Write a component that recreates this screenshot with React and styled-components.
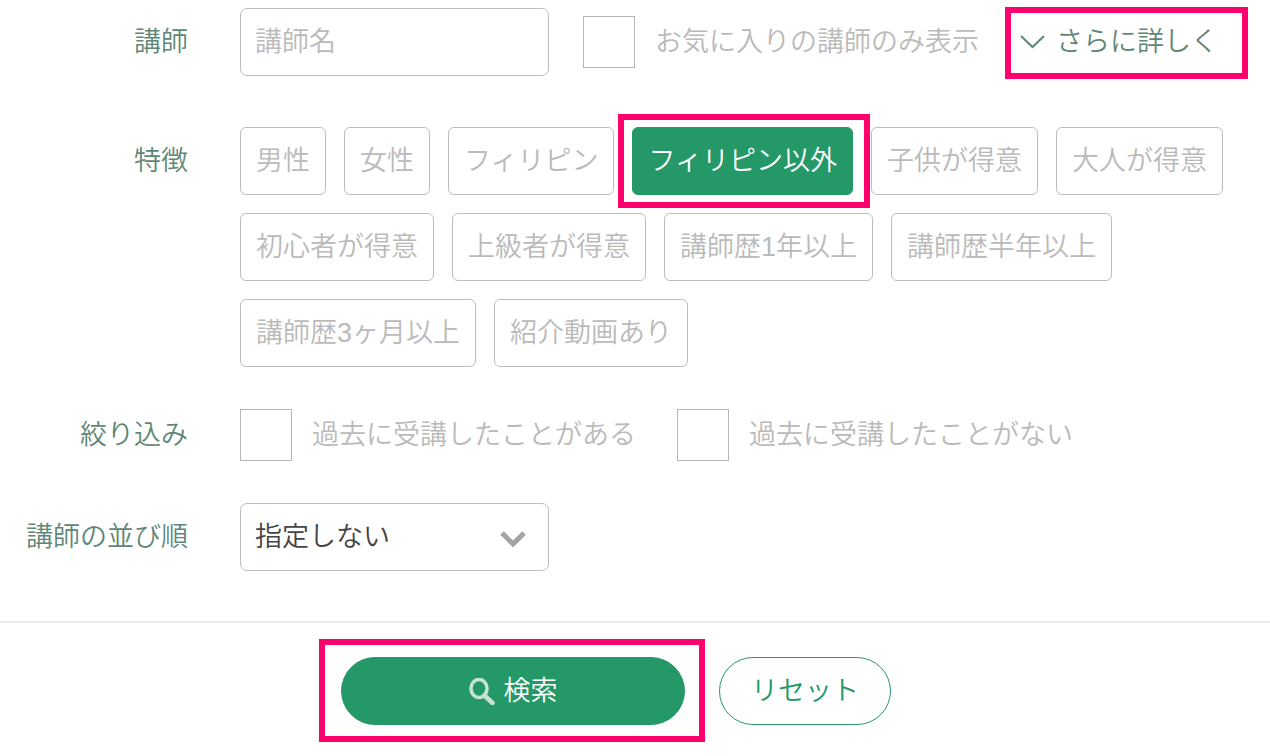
import React, { useState } from 'react'
import styled, { createGlobalStyle } from 'styled-components'


const features = [
    '男性',
    '女性',
    'フィリピン',
    'フィリピン以外',
    '子供が得意',
    '大人が得意',
    '初心者が得意',
    '上級者が得意',
    '講師歴1年以上',
    '講師歴半年以上',
    '講師歴3ヶ月以上',
    '紹介動画あり'
]

const SearchIcon = () => (
    <svg width="26" height="27" viewBox="0 0 26 27" fill="none" stroke="#c6e3d6" aria-hidden="true">
        <ellipse cx="10" cy="10.5" rx="8" ry="9" strokeWidth="3.6" />
        <path d="M15.5 17.5 L23.5 25" strokeWidth="4.6" strokeLinecap="round" />
    </svg>
)

const Check = ({ children }) => (
    <CheckLabel>
        <CheckBox type="checkbox" />
        {children}
    </CheckLabel>
)

const FeatureList = () => {
    const [selected, setSelected] = useState('フィリピン以外')

    return (
        <Chips role="group" aria-labelledby="features">
            {features.map((name) => {
                const on = selected === name
                const chip = (
                    <Chip key={name} type="button" $on={on} aria-pressed={on} onClick={() => setSelected(name)}>
                        {name}
                    </Chip>
                )
                return on ? <Marked key={name} $inset="-13px -17px -13px -14px">{chip}</Marked> : chip
            })}
        </Chips>
    )
}

const App = () => {
    return (
        <Form onSubmit={(e) => e.preventDefault()}>
            <GlobalStyle />
            <Row $after={51}>
                <Name as="label" htmlFor="teacher">講師</Name>
                <Fields>
                    <TextField id="teacher" type="text" placeholder="講師名" />
                    <Checks>
                        <Check>お気に入りの講師のみ表示</Check>
                        <Marked $inset="-1px -30px -3px -15px">
                            <MoreLink href="#more">
                                <svg width="25" height="14" viewBox="0 0 25 14" fill="none" stroke="#5f8777" strokeWidth="2" aria-hidden="true">
                                    <path d="M1 1 L12.5 12 L24 1" />
                                </svg>
                                さらに詳しく
                            </MoreLink>
                        </Marked>
                    </Checks>
                </Fields>
            </Row>
            <Row $after={34}>
                <Name id="features">特徴</Name>
                <FeatureList />
            </Row>
            <Row $after={34}>
                <Name id="narrow">絞り込み</Name>
                <Checks role="group" aria-labelledby="narrow">
                    <Check>過去に受講したことがある</Check>
                    <Check>過去に受講したことがない</Check>
                </Checks>
            </Row>
            <Row $after={50}>
                <Name as="label" htmlFor="order">講師の並び順</Name>
                <SelectWrap>
                    <Select id="order">
                        <option>指定しない</option>
                    </Select>
                    <SelectArrow width="26" height="18" viewBox="0 0 26 18" fill="none" stroke="#a3a3a3" strokeWidth="5" aria-hidden="true">
                        <path d="M2 3 L13 14 L24 3" />
                    </SelectArrow>
                </SelectWrap>
            </Row>
            <Actions>
                <Marked $inset="-18px -20px -17px -22px">
                    <SearchButton type="submit">
                        <SearchIcon />
                        検索
                    </SearchButton>
                </Marked>
                <ResetButton type="reset">リセット</ResetButton>
            </Actions>
        </Form>
    )
}

const GlobalStyle = createGlobalStyle`
    * {
        box-sizing: border-box;
    }

    body {
        margin: 0;
        background: #fff;
    }

    body, input, select, button {
        font-family: "Liberation Sans", "Noto Sans CJK JP", sans-serif;
        font-size: 27px;
        font-weight: 350;
        line-height: 40px;
    }
`

const Form = styled.form`
    padding-top: 8px;
`

const Row = styled.div`
    display: grid;
    grid-template-columns: 188px 1fr;
    column-gap: 52px;
    padding-right: 24px;
    margin-bottom: ${(props) => props.$after}px;
`

const Name = styled.div`
    display: flex;
    align-items: center;
    justify-content: flex-end;
    height: 68px;
    color: #5f8777;
    white-space: nowrap;
`

const Fields = styled.div`
    display: flex;
    align-items: center;
    gap: 34px;
`

const Checks = styled.div`
    display: flex;
    align-items: center;
    gap: 41px;
`

const CheckLabel = styled.label`
    display: flex;
    align-items: center;
    gap: 20px;
    color: #bababa;
    white-space: nowrap;
`

const CheckBox = styled.input`
    appearance: none;
    flex: none;
    width: 52px;
    height: 52px;
    margin: 0;
    border: 1px solid #b5b5b5;
    background: #fff;

    &:checked {
        background: #259868;
    }
`

const TextField = styled.input`
    width: 309px;
    height: 68px;
    padding: 0 14px;
    border: 1px solid #bdbdbd;
    border-radius: 7px;
    background: #fff;
    color: #444;

    &::placeholder {
        color: #bababa;
        opacity: 1;
    }
`

const Marked = styled.div`
    position: relative;

    &::after {
        content: "";
        position: absolute;
        inset: ${(props) => props.$inset};
        z-index: 1;
        border: 6px solid #ff006e;
        pointer-events: none;
    }
`

const MoreLink = styled.a`
    display: flex;
    align-items: center;
    gap: 11px;
    height: 68px;
    color: #5f8777;
    text-decoration: none;
    white-space: nowrap;
`

const Chips = styled.div`
    display: flex;
    flex-wrap: wrap;
    gap: 18px;
`

const Chip = styled.button`
    height: 68px;
    padding: 0 15px;
    border: 1px solid ${(props) => (props.$on ? '#259868' : '#bdbdbd')};
    border-radius: 6px;
    background: ${(props) => (props.$on ? '#259868' : '#fff')};
    color: ${(props) => (props.$on ? '#fff' : '#bababa')};
    white-space: nowrap;
    cursor: pointer;
`

const SelectWrap = styled.div`
    position: relative;
    width: 309px;
`

const Select = styled.select`
    appearance: none;
    width: 100%;
    height: 68px;
    padding: 0 14px;
    border: 1px solid #bdbdbd;
    border-radius: 7px;
    background: #fff;
    color: #444;
`

const SelectArrow = styled.svg`
    position: absolute;
    top: 27px;
    right: 23px;
    pointer-events: none;
`

const Actions = styled.div`
    display: flex;
    justify-content: center;
    gap: 34px;
    padding: 34px 38px 31px 0;
    border-top: 2px solid #ebebeb;
`

const PillButton = styled.button`
    display: flex;
    align-items: center;
    justify-content: center;
    gap: 9px;
    height: 68px;
    border: 1px solid #259868;
    border-radius: 34px;
    cursor: pointer;
`

const SearchButton = styled(PillButton)`
    width: 344px;
    background: #259868;
    color: #fff;
`

const ResetButton = styled(PillButton)`
    width: 172px;
    background: #fff;
    color: #259868;
`


export default App
